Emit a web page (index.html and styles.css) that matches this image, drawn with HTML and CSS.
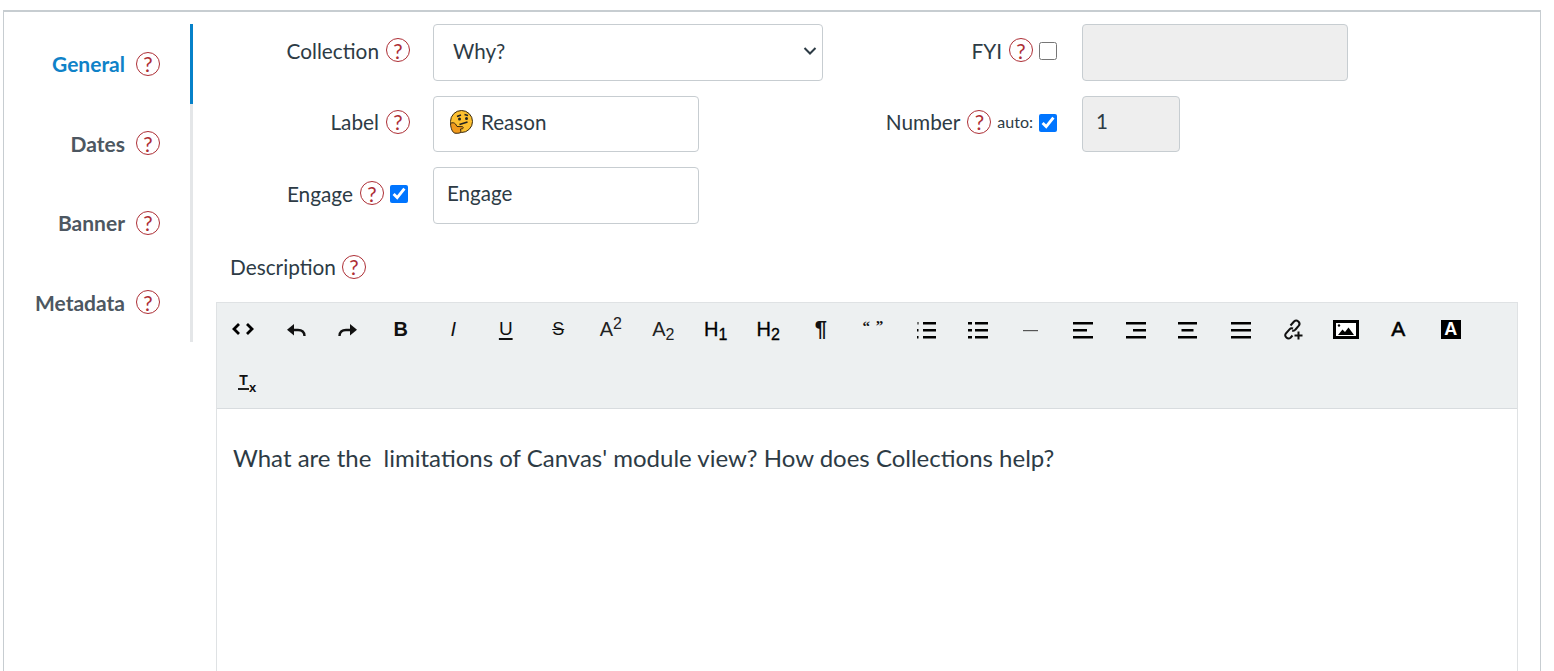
FILE: index.html
```html
<!DOCTYPE html>
<html lang="en">
<head>
<meta charset="utf-8">
<title>Collections</title>
<link rel="stylesheet" href="styles.css">
</head>
<body>
<div class="panel">
  <nav class="tabs">
    <a class="tab active"><span>General</span><i class="help">?</i></a>
    <a class="tab"><span>Dates</span><i class="help">?</i></a>
    <a class="tab"><span>Banner</span><i class="help">?</i></a>
    <a class="tab"><span>Metadata</span><i class="help">?</i></a>
  </nav>
  <main class="main">
    <div class="form">
      <div class="label"><span>Collection</span><i class="help">?</i></div>
      <div class="field select"><span>Why?</span>
        <svg width="14" height="10" viewBox="0 0 14 10"><path d="M1.500 2l5.500 5.500L12.500 2" fill="none" stroke="#2d3b45" stroke-width="2"/></svg>
      </div>
      <div class="label"><span>FYI</span><i class="help">?</i><input type="checkbox" class="check"></div>
      <input class="field wide off" disabled>

      <div class="label"><span>Label</span><i class="help">?</i></div>
      <div class="field short emoji-field">
        <svg width="24" height="24" viewBox="0 0 24 24"><circle cx="12.500" cy="11.500" r="11" fill="#fdc02f" stroke="#3a2a10" stroke-width="1"/><path d="M1.500 13.500c1.800-1.300 3.800-.8 5 .5l1.500 2.500 5.500.2c1 .2 1 1.800 0 2l-2 .3.500 3.200c-.5.800-3 1.300-6 1-2.500-.6-4.200-4.500-4.500-9.700z" fill="#f29a1c" stroke="#3a2a10" stroke-width="1"/><path d="M8 6.500l4-1.500M15.500 4.500l3.500 1" stroke="#222" stroke-width="1.500" fill="none"/><circle cx="10.500" cy="9" r="1.500" fill="#222"/><circle cx="17.500" cy="8.500" r="1.500" fill="#222"/><path d="M10.500 14.500l8-2.500" stroke="#222" stroke-width="1.600" fill="none"/></svg>
        <span>Reason</span>
      </div>
      <div class="label"><span>Number</span><i class="help">?</i><small>auto:</small><input type="checkbox" class="check" checked></div>
      <input class="field tiny off" value="1" disabled>

      <div class="label"><span>Engage</span><i class="help">?</i><input type="checkbox" class="check" checked></div>
      <input class="field short" value="Engage">
    </div>

    <div class="desc"><span>Description</span><i class="help">?</i></div>

    <section class="editor">
      <div class="toolbar">
        <button class="tb"><svg width="24" height="14" viewBox="0 0 24 14"><path d="M8 2L3 7l5 5M16 2l5 5-5 5" fill="none" stroke="#000" stroke-width="2.800"/></svg></button>
        <button class="tb"><svg class="arrow" width="20" height="14" viewBox="0 0 20 14"><path d="M18.500 13c0-4-2.500-6-6.500-6H6" fill="none" stroke="#111" stroke-width="2.400"/><path d="M8 1L1 6.800 8 12.500z" fill="#111"/></svg></button>
        <button class="tb"><svg class="arrow" width="20" height="14" viewBox="0 0 20 14"><path d="M1.500 13c0-4 2.500-6 6.500-6h6" fill="none" stroke="#111" stroke-width="2.400"/><path d="M12 1l7 5.800-7 5.700z" fill="#111"/></svg></button>
        <button class="tb"><b>B</b></button>
        <button class="tb"><em>I</em></button>
        <button class="tb"><span class="under">U</span></button>
        <button class="tb"><s class="strike">S</s></button>
        <button class="tb thin"><span>A<sup>2</sup></span></button>
        <button class="tb thin"><span>A<sub>2</sub></span></button>
        <button class="tb med"><span>H<sub>1</sub></span></button>
        <button class="tb med"><span>H<sub>2</sub></span></button>
        <button class="tb"><span class="pil">¶</span></button>
        <button class="tb"><span class="quote">“ ”</span></button>
        <button class="tb"><svg class="bars" width="20" height="18" viewBox="0 0 20 18"><g fill="#000"><rect x="7" y="1" width="13" height="2.500"/><rect x="7" y="8" width="13" height="2.500"/><rect x="7" y="15" width="13" height="2.500"/><rect x="1.500" y="1" width="1" height="2.500"/><rect x="1" y="8" width="1.500" height="2.500"/><rect x="1" y="15" width="1.500" height="2.500"/></g></svg></button>
        <button class="tb"><svg class="bars" width="20" height="18" viewBox="0 0 20 18"><g fill="#000"><rect x="7" y="1" width="13" height="2.500"/><rect x="7" y="8" width="13" height="2.500"/><rect x="7" y="15" width="13" height="2.500"/><rect x="0" y="1" width="4" height="2.500"/><rect x="0" y="8" width="4" height="2.500"/><rect x="0" y="15" width="4" height="2.500"/></g></svg></button>
        <button class="tb"><svg class="bars" width="16" height="18" viewBox="0 0 16 18"><rect y="9" width="15" height="1.200" fill="#555"/></svg></button>
        <button class="tb"><svg class="bars" width="20" height="18" viewBox="0 0 20 18"><g fill="#000"><rect y="1" width="20" height="2.500"/><rect y="8" width="14" height="2.500"/><rect y="15" width="20" height="2.500"/></g></svg></button>
        <button class="tb"><svg class="bars" width="20" height="18" viewBox="0 0 20 18"><g fill="#000"><rect y="1" width="20" height="2.500"/><rect x="7" y="8" width="13" height="2.500"/><rect y="15" width="20" height="2.500"/></g></svg></button>
        <button class="tb"><svg class="bars" width="20" height="18" viewBox="0 0 20 18"><g fill="#000"><rect y="1" width="19" height="2.500"/><rect x="3.500" y="8" width="12" height="2.500"/><rect y="15" width="19" height="2.500"/></g></svg></button>
        <button class="tb"><svg class="bars" width="20" height="18" viewBox="0 0 20 18"><g fill="#000"><rect y="1" width="20" height="2.500"/><rect y="8" width="20" height="2.500"/><rect y="15" width="20" height="2.500"/></g></svg></button>
        <button class="tb"><svg width="22" height="22" viewBox="0 0 22 22"><g fill="none" stroke="#111" stroke-width="2"><path d="M8.500 7.500l3.500-4a3.200 3.200 0 0 1 4.800 4.200l-3.300 3.800a3 3 0 0 1-3.300 1"/><path d="M11 10.500a3 3 0 0 0-3.500.8l-3.700 4.200a3.200 3.200 0 0 0 4.700 4.200l2-2.200"/><path d="M16.500 13.500v8M12.500 17.500h8"/></g></svg></button>
        <button class="tb"><svg width="26" height="19" viewBox="0 0 26 19"><rect x="1.500" y="1.500" width="23" height="16" fill="#fff" stroke="#000" stroke-width="3"/><path d="M5 15l4.500-5.500 2.500 2.500 3.500-4.500 5.500 7.500z" fill="#000"/><circle cx="6" cy="5.500" r="1.200" fill="#000"/></svg></button>
        <button class="tb med boldish">A</button>
        <button class="tb"><span class="boxa">A</span></button>
        <button class="tb"><span class="tx"><span class="tx-t">T</span><span class="tx-x">x</span></span></button>
      </div>
      <div class="content">What are the  limitations of Canvas' module view? How does Collections help?</div>
    </section>
  </main>
</div>
</body>
</html>
```
FILE: styles.css
```css
* { box-sizing: border-box; }
html, body { margin: 0; height: 671px; overflow: hidden; background: #fff; }
body { padding: 10px 13px 0 3px; font-family: Lato, "Open Sans", sans-serif; color: #2d3b45; }

.panel {
  display: flex;
  height: 661px;
  border-top: 2px solid #c7cdd1;
  border-left: 1px solid #c7cdd1;
  border-right: 1px solid #c7cdd1;
  padding-top: 12px;
}

.tabs { width: 189px; height: 318px; flex: none; border-right: 3px solid #e4e6e8; }
.tab {
  height: 79.500px;
  margin-right: -3px;
  border-right: 3px solid transparent;
  display: flex;
  align-items: center;
  justify-content: flex-end;
  gap: 11px;
  padding-right: 30px;
  font-size: 21px;
  font-weight: 700;
  color: #4d5761;
}
.tab.active { color: #0f82c8; border-right-color: #0681c9; }

.help {
  display: inline-flex;
  align-items: center;
  justify-content: center;
  width: 24px;
  height: 24px;
  flex: none;
  border: 1.500px solid #ad2e35;
  border-radius: 50%;
  color: #ad2e35;
  font-style: normal;
  font-weight: 400;
  font-size: 21px;
  line-height: 1;
}

.main { flex: 1; min-width: 0; padding: 0 22px 0 23px; display: flex; flex-direction: column; }

.form {
  margin-left: -23px;
  display: grid;
  grid-template-columns: 217px 413px 236px auto;
  grid-auto-rows: 56.670px;
  row-gap: 15px;
  font-size: 20.800px;
}
.label {
  display: flex;
  align-items: center;
  justify-content: flex-end;
  gap: 6px;
  height: 52px;
  white-space: nowrap;
}
.label > span { margin-right: 1px; }
.label small { font-size: 16px; }

.check { width: 18px; height: 18px; margin: 2px 2px 0 0; flex: none; }

.field {
  height: 56.670px;
  margin-left: 23px;
  border: 1px solid #c7cdd1;
  border-radius: 4px;
  background: #fff;
  font: 400 20.600px Lato, "Open Sans", sans-serif;
  color: #2d3b45;
  padding: 0 13px 5px;
}

.select { display: flex; align-items: center; justify-content: space-between; width: 390px; padding: 0 5px 2px 19px; }
.short { width: 266px; }
.wide { width: 266px; }
.tiny { width: 98px; }
.off { background: #eeeeee; }
.emoji-field { display: flex; align-items: center; gap: 8px; padding: 0 13px 3px 15px; }

.desc {
  display: flex;
  align-items: center;
  gap: 6px;
  margin: 19px 0 0 14px;
  height: 48px;
  font-size: 20.800px;
}

.editor { flex: 1; margin-top: 11px; border: 1px solid #dfe2e4; border-bottom: 0; display: flex; flex-direction: column; }
.toolbar {
  display: flex;
  flex-wrap: wrap;
  background: #edf0f1;
  border-bottom: 1px solid #d8dcdf;
  height: 106px;
}
.tb {
  width: 52.500px;
  height: 53px;
  padding: 0;
  border: 0;
  background: none;
  display: flex;
  align-items: center;
  justify-content: center;
  font: 400 20px "Liberation Sans", Arial, sans-serif;
  color: #111;
}
.tb b { font-weight: 700; }
.tb em { font-size: 20px; }
.bars { margin-top: 1px; }
.arrow { margin-top: 2px; }
.under { text-decoration: underline; text-decoration-thickness: 2px; text-underline-offset: 3px; font-size: 19px; }
.strike { font-size: 18px; }
.tb sup { font-size: 16px; line-height: 0; vertical-align: 7px; }
.tb sub { font-size: 16px; line-height: 0; vertical-align: -4px; }
.thin { color: #222; }
.med { color: #000; -webkit-text-stroke: .3px #000; }
.boldish { font-size: 21px; -webkit-text-stroke: .5px #000; }
.pil { font-size: 22px; font-weight: 700; }
.quote { font: 700 15px "Liberation Serif", serif; letter-spacing: 1px; position: relative; top: -3px; }
.boxa { display: inline-flex; align-items: center; justify-content: center; width: 20px; height: 19px; background: #000; color: #fff; font-size: 18px; font-weight: 700; }
.tx { display: inline-flex; align-items: flex-end; font-weight: 700; margin-left: 8px; margin-top: 1px; }
.tx-t { font-size: 14px; line-height: 11px; border-bottom: 2px solid #222; padding: 0 1px 2px; }
.tx-x { font-size: 13px; line-height: 8px; margin-bottom: -2px; }

.content {
  flex: 1;
  padding: 33px 16px 0;
  font-size: 24px;
  line-height: 32px;
  white-space: pre-wrap;
  color: #2d3b45;
}
```
